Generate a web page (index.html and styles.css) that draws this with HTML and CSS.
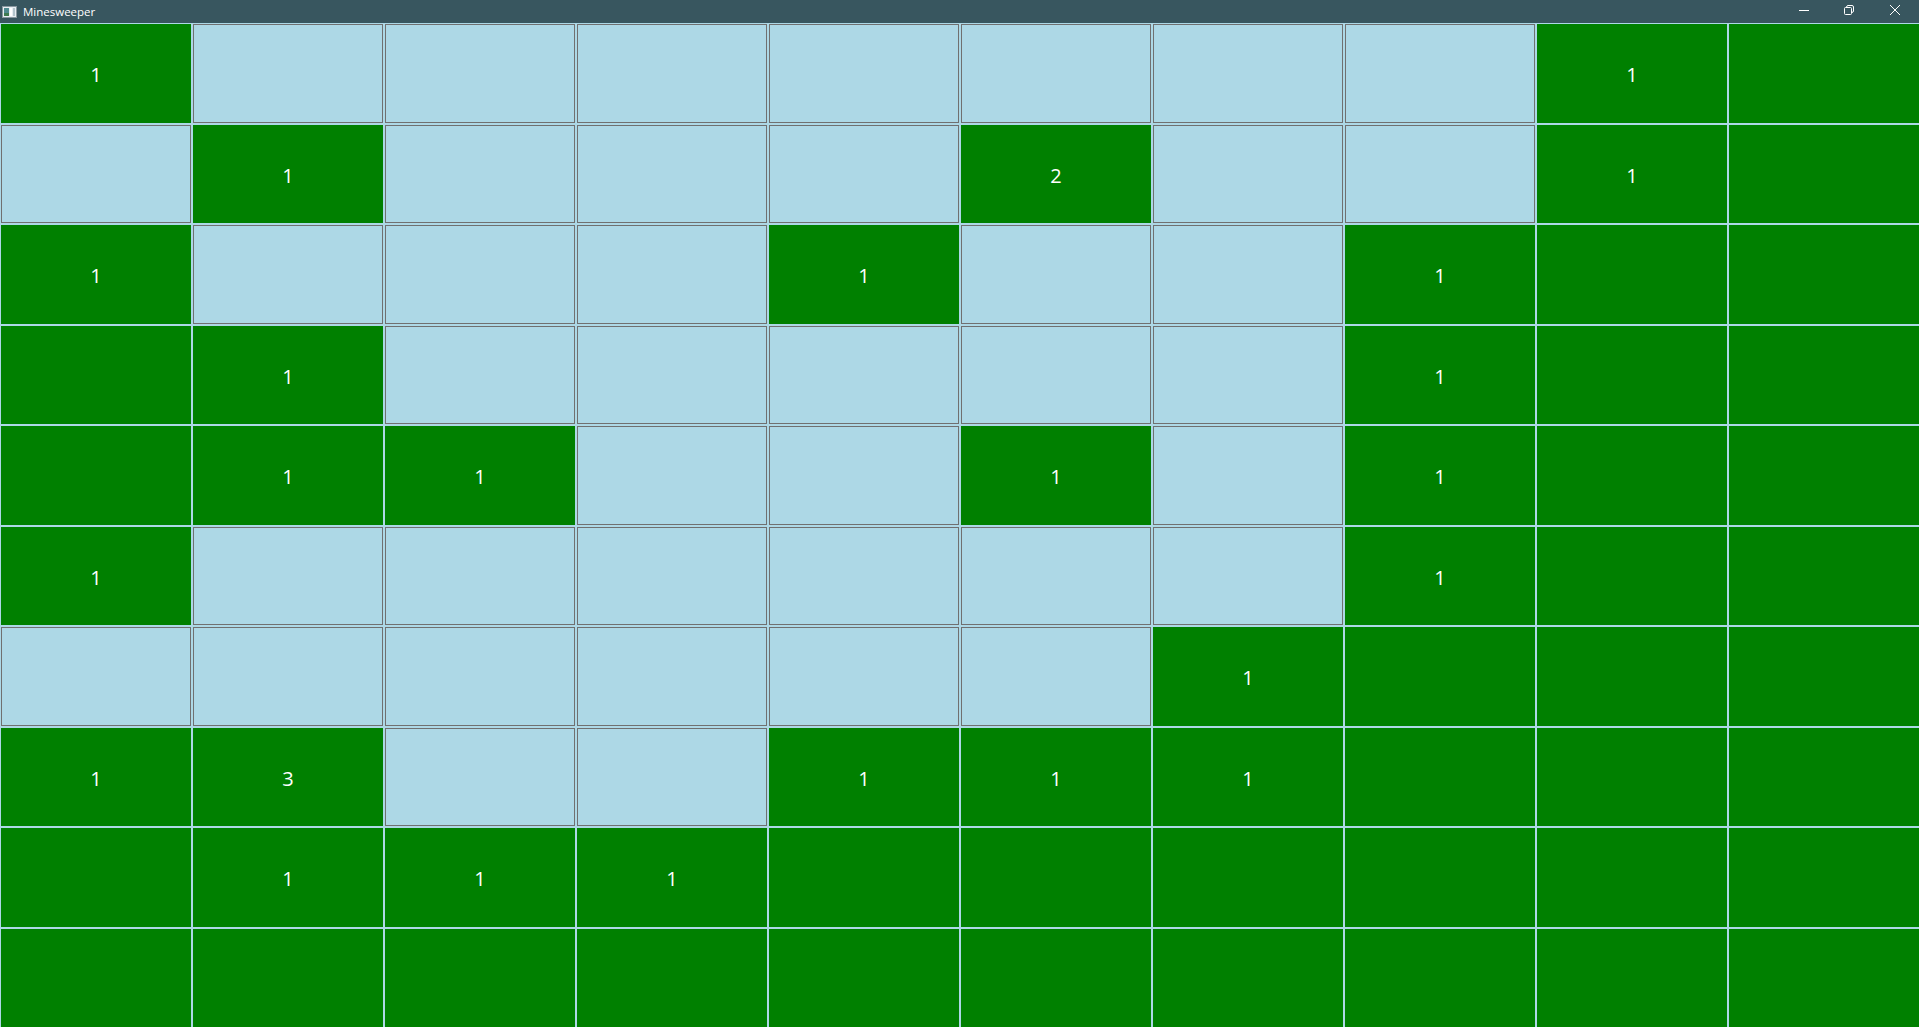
FILE: index.html
```html
<!DOCTYPE html>
<html lang="en">
<head>
  <meta charset="UTF-8">
  <title>Minesweeper</title>
  <link rel="stylesheet" href="styles.css">
</head>
<body>
  <!-- Window title bar -->
  <header class="titlebar">
    <svg class="app-icon" width="15" height="12" viewBox="0 0 15 12">
      <rect x="0.5" y="0.5" width="14" height="11" fill="#e8eef2" stroke="#8a98a0"/>
      <rect x="2" y="2" width="5" height="8" fill="#4f8a8f"/>
      <rect x="2" y="7" width="5" height="3" fill="#3f7a4f"/>
      <rect x="8" y="2" width="2" height="8" fill="#ffffff"/>
      <rect x="11" y="2" width="2" height="8" fill="#b4c4cc"/>
    </svg>
    <span class="title">Minesweeper</span>
    <div class="window-buttons">
      <span class="window-button minimize">
        <svg width="10" height="10" viewBox="0 0 10 10"><path d="M0 5.5H10" stroke="#fff" fill="none"/></svg>
      </span>
      <span class="window-button">
        <svg width="10" height="10" viewBox="0 0 10 10"><path d="M1.5 2.5H6.5Q7.5 2.5 7.5 3.5V8.5Q7.5 9.5 6.5 9.5H1.5Q0.5 9.5 0.5 8.5V3.5Q0.5 2.5 1.5 2.5ZM2.5 2.5Q2.5 0.5 4 0.5H8Q9.5 0.5 9.5 2V6Q9.5 7.5 7.5 7.5" stroke="#fff" fill="none"/></svg>
      </span>
      <span class="window-button">
        <svg width="10" height="10" viewBox="0 0 10 10"><path d="M0 0L10 10M10 0L0 10" stroke="#fff" fill="none"/></svg>
      </span>
    </div>
  </header>

  <!-- Game board, 10 x 10 -->
  <main class="board">
    <!-- row 1 -->
    <div class="cell open">1</div><div class="cell"></div><div class="cell"></div><div class="cell"></div><div class="cell"></div><div class="cell"></div><div class="cell"></div><div class="cell"></div><div class="cell open">1</div><div class="cell open"></div>
    <!-- row 2 -->
    <div class="cell"></div><div class="cell open">1</div><div class="cell"></div><div class="cell"></div><div class="cell"></div><div class="cell open">2</div><div class="cell"></div><div class="cell"></div><div class="cell open">1</div><div class="cell open"></div>
    <!-- row 3 -->
    <div class="cell open">1</div><div class="cell"></div><div class="cell"></div><div class="cell"></div><div class="cell open">1</div><div class="cell"></div><div class="cell"></div><div class="cell open">1</div><div class="cell open"></div><div class="cell open"></div>
    <!-- row 4 -->
    <div class="cell open"></div><div class="cell open">1</div><div class="cell"></div><div class="cell"></div><div class="cell"></div><div class="cell"></div><div class="cell"></div><div class="cell open">1</div><div class="cell open"></div><div class="cell open"></div>
    <!-- row 5 -->
    <div class="cell open"></div><div class="cell open">1</div><div class="cell open">1</div><div class="cell"></div><div class="cell"></div><div class="cell open">1</div><div class="cell"></div><div class="cell open">1</div><div class="cell open"></div><div class="cell open"></div>
    <!-- row 6 -->
    <div class="cell open">1</div><div class="cell"></div><div class="cell"></div><div class="cell"></div><div class="cell"></div><div class="cell"></div><div class="cell"></div><div class="cell open">1</div><div class="cell open"></div><div class="cell open"></div>
    <!-- row 7 -->
    <div class="cell"></div><div class="cell"></div><div class="cell"></div><div class="cell"></div><div class="cell"></div><div class="cell"></div><div class="cell open">1</div><div class="cell open"></div><div class="cell open"></div><div class="cell open"></div>
    <!-- row 8 -->
    <div class="cell open">1</div><div class="cell open">3</div><div class="cell"></div><div class="cell"></div><div class="cell open">1</div><div class="cell open">1</div><div class="cell open">1</div><div class="cell open"></div><div class="cell open"></div><div class="cell open"></div>
    <!-- row 9 -->
    <div class="cell open"></div><div class="cell open">1</div><div class="cell open">1</div><div class="cell open">1</div><div class="cell open"></div><div class="cell open"></div><div class="cell open"></div><div class="cell open"></div><div class="cell open"></div><div class="cell open"></div>
    <!-- row 10 -->
    <div class="cell open"></div><div class="cell open"></div><div class="cell open"></div><div class="cell open"></div><div class="cell open"></div><div class="cell open"></div><div class="cell open"></div><div class="cell open"></div><div class="cell open"></div><div class="cell open"></div>
  </main>
</body>
</html>
```

FILE: styles.css
```css
/* Basic styling */
html, body {
  height: 100%;
}

body {
  margin: 0;
  display: flex;
  flex-direction: column;
  overflow: hidden;
  background-color: #add8e6;
  font-family: "Open Sans", "Noto Sans", sans-serif;
}

/* Title bar */
.titlebar {
  flex: 0 0 23px;
  display: flex;
  align-items: center;
  padding-right: 1px;
  background-color: #38565f;
  color: #ffffff;
}

.app-icon {
  margin: 0 6px 0 2px;
}

.title {
  font-size: 11.5px;
}

.window-buttons {
  display: flex;
  margin-left: auto;
  height: 100%;
}

.window-button {
  width: 46px;
  padding-bottom: 3px;
  box-sizing: border-box;
  display: flex;
  align-items: center;
  justify-content: center;
}

.window-button.minimize {
  margin-right: -1px;
}

/* Board, a pixel wider and taller than the window so the outer margins are cut off */
.board {
  flex: 1;
  display: grid;
  grid-template-columns: repeat(10, 1fr);
  grid-template-rows: repeat(10, 1fr);
  min-height: 0;
  margin-right: -1px;
  margin-bottom: -1px;
}

/* Unopened cell */
.cell {
  margin: 1px;
  padding-top: 3px;
  display: flex;
  align-items: center;
  justify-content: center;
  box-sizing: border-box;
  border: 1px solid #707070;
  background-color: #add8e6;
  color: #ffffff;
  font-size: 20px;
}

/* Opened cell */
.cell.open {
  border: none;
  background-color: #008000;
}
```
